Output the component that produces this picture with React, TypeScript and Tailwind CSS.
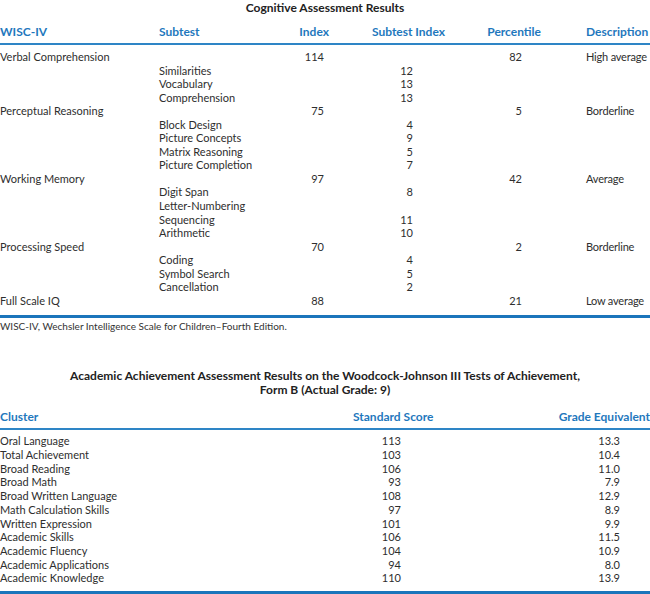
import React from "react";

const blue = "text-[#1f78bd]";

type Row = { a?: string; b?: string; c?: string; d?: string; e?: string; f?: string };

const rows1: Row[] = [
  { a: "Verbal Comprehension", c: "114", e: "82", f: "High average" },
  { b: "Similarities", d: "12" },
  { b: "Vocabulary", d: "13" },
  { b: "Comprehension", d: "13" },
  { a: "Perceptual Reasoning", c: "75", e: "5", f: "Borderline" },
  { b: "Block Design", d: "4" },
  { b: "Picture Concepts", d: "9" },
  { b: "Matrix Reasoning", d: "5" },
  { b: "Picture Completion", d: "7" },
  { a: "Working Memory", c: "97", e: "42", f: "Average" },
  { b: "Digit Span", d: "8" },
  { b: "Letter-Numbering" },
  { b: "Sequencing", d: "11" },
  { b: "Arithmetic", d: "10" },
  { a: "Processing Speed", c: "70", e: "2", f: "Borderline" },
  { b: "Coding", d: "4" },
  { b: "Symbol Search", d: "5" },
  { b: "Cancellation", d: "2" },
  { a: "Full Scale IQ", c: "88", e: "21", f: "Low average" },
];

const rows2: [string, string, string][] = [
  ["Oral Language", "113", "13.3"],
  ["Total Achievement", "103", "10.4"],
  ["Broad Reading", "106", "11.0"],
  ["Broad Math", "93", "7.9"],
  ["Broad Written Language", "108", "12.9"],
  ["Math Calculation Skills", "97", "8.9"],
  ["Written Expression", "101", "9.9"],
  ["Academic Skills", "106", "11.5"],
  ["Academic Fluency", "104", "10.9"],
  ["Academic Applications", "94", "8.0"],
  ["Academic Knowledge", "110", "13.9"],
];

const cols1 = "grid grid-cols-[159px_131px_39px_116px_96px_109px]";
const cols2 = "grid grid-cols-[353px_81px_216px]";

export default function App() {
  return (
    <div
      className="w-[650px] h-[594px] bg-white text-[#2e2e2e] overflow-hidden text-[11px]"
      style={{ fontFamily: "Lato, 'Open Sans', sans-serif" }}
    >
      <div className="h-[13px] leading-[13px] pt-[1px] text-center font-bold text-[12px] text-[#222]">
        Cognitive Assessment Results
      </div>

      <div className={`${cols1} mt-[12px] h-[20px] leading-[14px] border-b-[2px] border-[#2e85c6] font-bold ${blue} text-[12px] whitespace-nowrap`}>
        <div>WISC-IV</div>
        <div>Subtest</div>
        <div className="text-right">Index</div>
        <div className="text-right">Subtest Index</div>
        <div className="text-right">Percentile</div>
        <div className="pl-[45px]">Description</div>
      </div>

      <div className="mt-[5px]">
        {rows1.map((r, i) => (
          <div key={i} className={`${cols1} h-[13.55px] leading-[13.55px] whitespace-nowrap`}>
            <div>{r.a ?? ""}</div>
            <div>{r.b ?? ""}</div>
            <div className="text-right pr-[5px]">{r.c ?? ""}</div>
            <div className="text-right pr-[32px]">{r.d ?? ""}</div>
            <div className="text-right pr-[19px]">{r.e ?? ""}</div>
            <div className="pl-[45px] tracking-[-0.2px]">{r.f ?? ""}</div>
          </div>
        ))}
      </div>

      <div className="mt-[8px] border-t-[3px] border-[#1b75bb]" />
      <div className="h-[12px] leading-[12px] mt-[2px] text-[10px] text-[#333]">
        WISC-IV, Wechsler Intelligence Scale for Children–Fourth Edition.
      </div>

      <div className="mt-[37px] text-center font-bold text-[12px] leading-[14px] text-[#222]">
        <div>Academic Achievement Assessment Results on the Woodcock-Johnson III Tests of Achievement,</div>
        <div>Form B (Actual Grade: 9)</div>
      </div>

      <div className={`${cols2} mt-[13px] h-[20px] leading-[14px] border-b-[2px] border-[#2e85c6] font-bold ${blue} text-[12px]`}>
        <div>Cluster</div>
        <div>Standard Score</div>
        <div className="text-right">Grade Equivalent</div>
      </div>

      <div className="mt-[4px]">
        {rows2.map((r, i) => (
          <div key={i} className={`${cols2} h-[13.7px] leading-[13.7px] whitespace-nowrap`}>
            <div>{r[0]}</div>
            <div className="text-right pr-[33px]">{r[1]}</div>
            <div className="text-right pr-[30px]">{r[2]}</div>
          </div>
        ))}
      </div>

      <div className="mt-[6px] border-t-[3px] border-[#1b75bb]" />
    </div>
  );
}
